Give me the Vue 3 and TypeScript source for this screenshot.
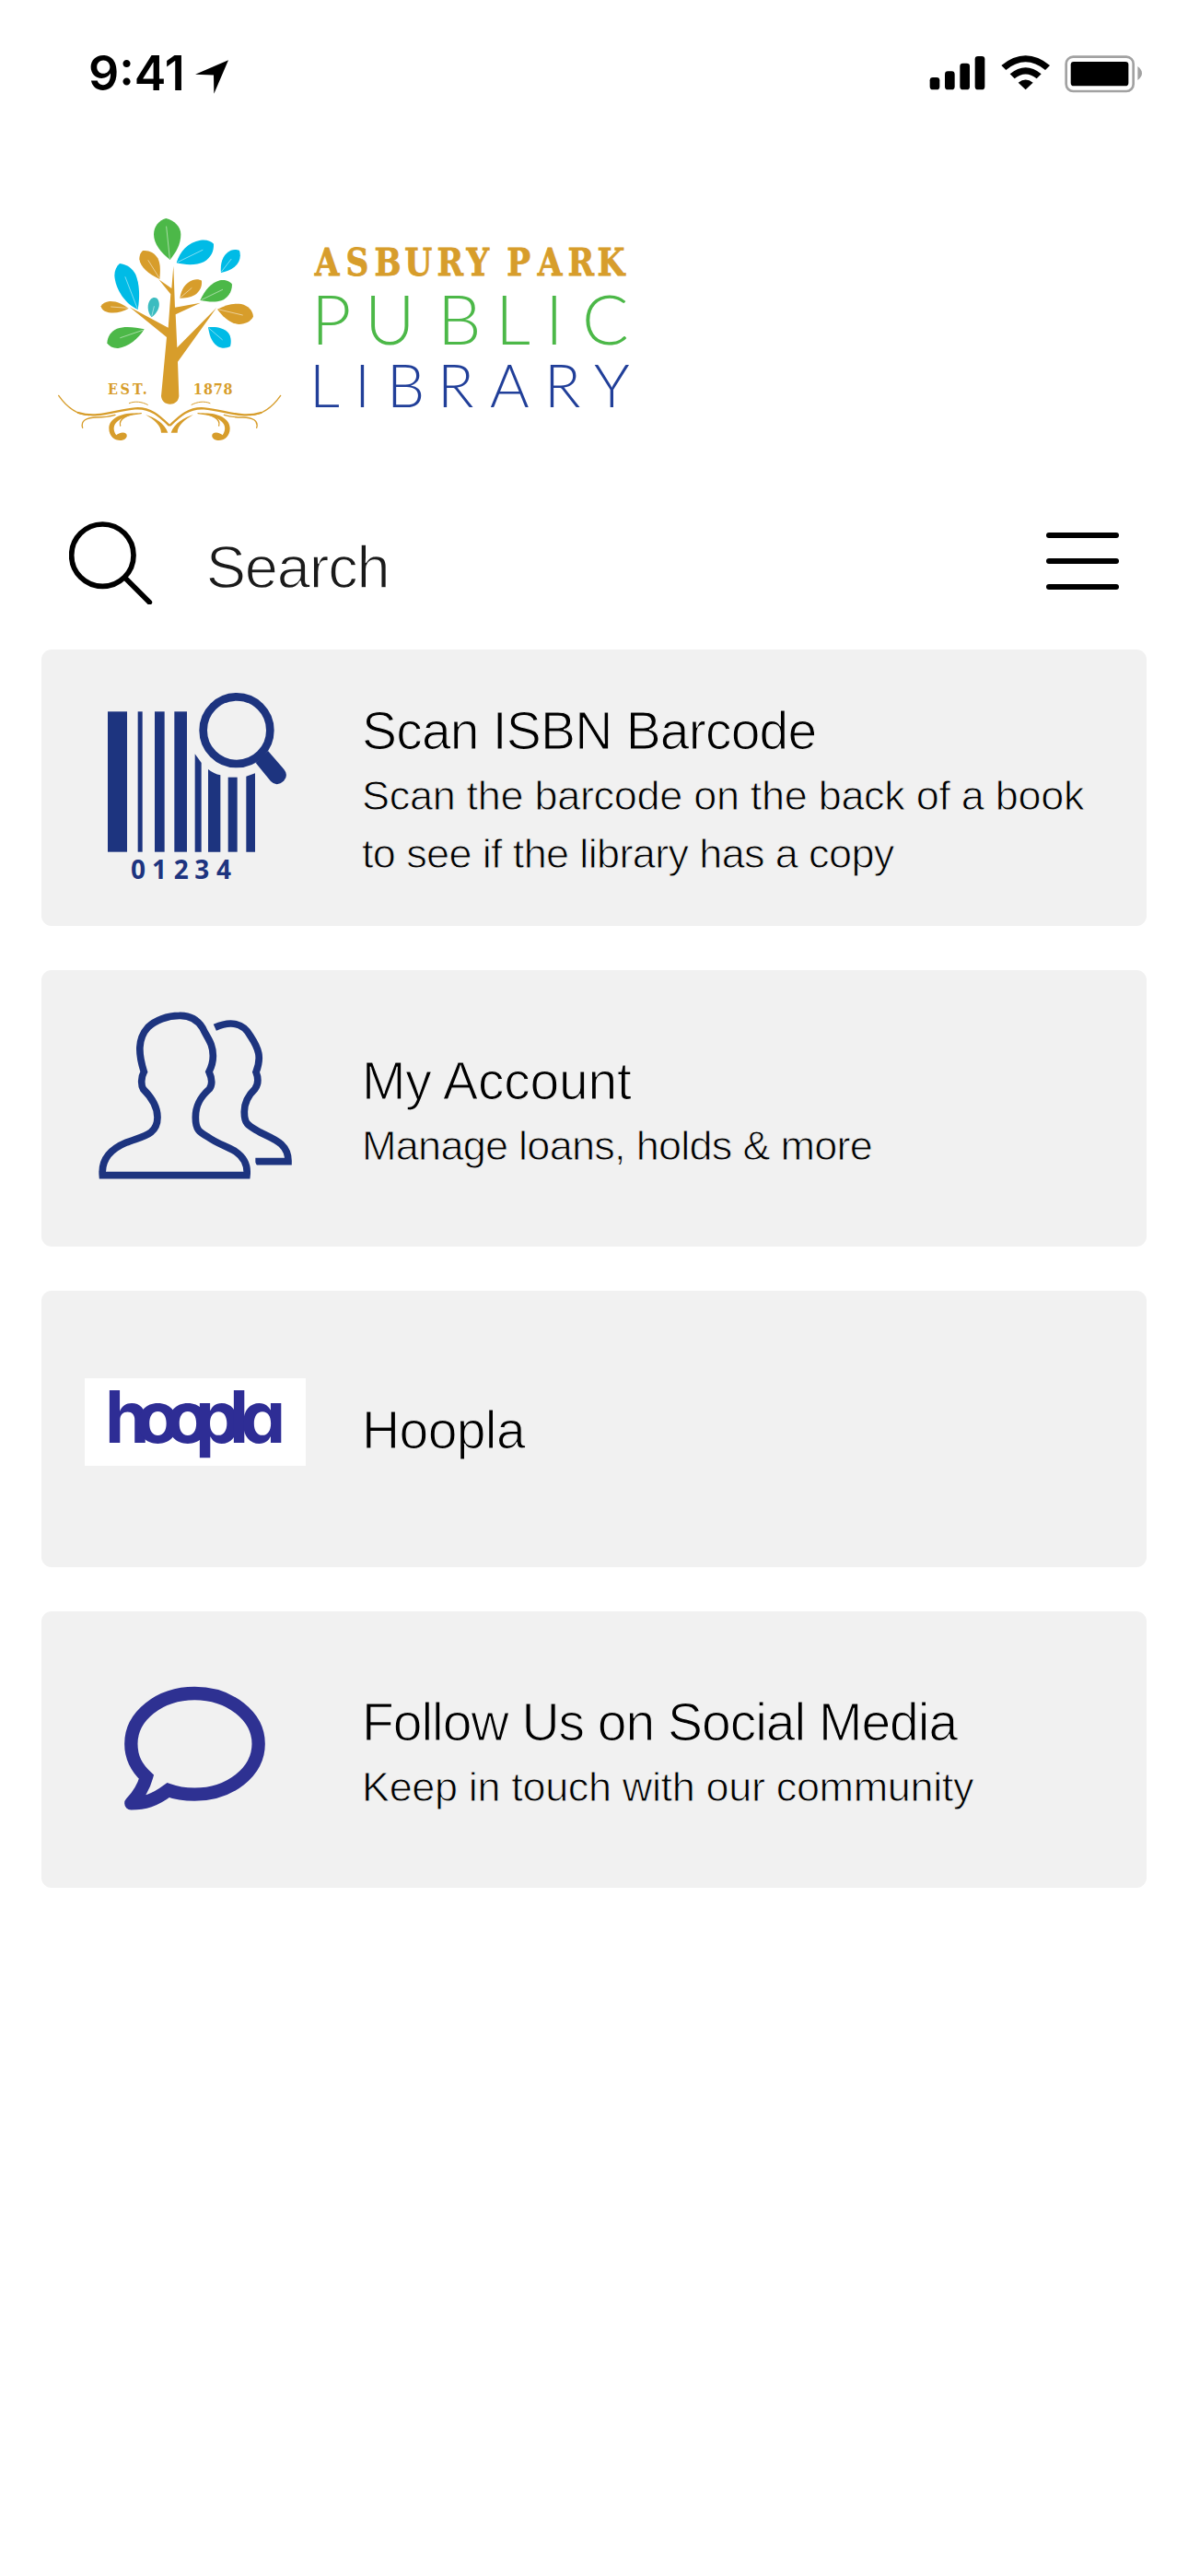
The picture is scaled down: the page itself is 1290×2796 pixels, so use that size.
<script setup lang="ts">
interface TextLine {
  text: string
  tracking: number
}

interface MenuCard {
  id: 'scan' | 'account' | 'hoopla' | 'social'
  title: TextLine
  lines: TextLine[]
}

const cards: MenuCard[] = [
  {
    id: 'scan',
    title: { text: 'Scan ISBN Barcode', tracking: -0.8 },
    lines: [
      { text: 'Scan the barcode on the back of a book', tracking: -0.3 },
      { text: 'to see if the library has a copy', tracking: -0.63 },
    ],
  },
  {
    id: 'account',
    title: { text: 'My Account', tracking: -0.2 },
    lines: [{ text: 'Manage loans, holds & more', tracking: -0.72 }],
  },
  { id: 'hoopla', title: { text: 'Hoopla', tracking: -0.6 }, lines: [] },
  {
    id: 'social',
    title: { text: 'Follow Us on Social Media', tracking: -1.02 },
    lines: [{ text: 'Keep in touch with our community', tracking: -0.35 }],
  },
]

interface Leaf {
  d: string
  color: string
  vein: string
}

const leaves: Leaf[] = [
  { color: '#4cb848', d: 'M404 186C375 164 351 135 351 103C351 79 366 58 391 51C418 58 439 78 439 103C439 136 424 161 404 186Z', vein: 'M403 182L392 78' },
  { color: '#00bbe6', d: 'M425 196C435 160 463 128 503 122C521 119 538 124 546 134C547 158 538 178 514 193C490 205 452 203 425 196Z', vein: 'M430 193L510 154' },
  { color: '#00bbe6', d: 'M570 228C566 195 578 166 602 155C612 152 624 153 630 156C636 175 631 195 614 209C601 219 586 224 570 228Z', vein: 'M572 224L603 184' },
  { color: '#d79d2b', d: 'M370 249C334 233 307 210 304 184C304 171 309 160 316 156C334 154 353 162 364 181C374 201 372 226 370 249Z', vein: 'M368 244L333 188' },
  { color: '#00bbe6', d: 'M299 348C259 330 226 284 223 237C223 221 229 207 240 198C261 200 281 212 292 234C305 266 306 309 299 348Z', vein: 'M297 343L258 242' },
  { color: '#3bbcc0', d: 'M344 373C329 355 328 328 341 314C347 309 354 308 361 311C371 321 371 339 362 353C357 361 351 368 344 373Z', vein: 'M345 367L352 338' },
  { color: '#d79d2b', d: 'M269 344C246 358 214 364 191 353C183 349 179 342 179 337C184 328 193 323 207 321C230 320 251 331 269 344Z', vein: 'M265 343L212 339' },
  { color: '#4cb848', d: 'M320 412C300 444 269 469 235 474C220 475 205 468 199 457C200 436 211 419 231 410C259 400 293 406 320 412Z', vein: 'M315 415L242 440' },
  { color: '#d79d2b', d: 'M436 311C440 283 454 260 478 252C490 248 501 250 507 254C509 274 500 290 484 301C469 309 452 311 436 311Z', vein: 'M440 307L474 278' },
  { color: '#4cb848', d: 'M502 318C517 285 539 260 566 253C583 250 600 256 606 266C606 291 592 310 571 319C550 326 524 322 502 318Z', vein: 'M507 316L575 283' },
  { color: '#d79d2b', d: 'M558 347C583 334 610 326 636 330C658 335 674 351 675 371C667 386 651 395 628 396C598 393 575 370 558 347Z', vein: 'M564 348L640 366' },
  { color: '#00bbe6', d: 'M528 406C553 403 578 407 593 423C603 435 604 453 600 468C586 475 572 475 558 467C537 453 532 428 528 406Z', vein: 'M532 410L574 446' },
]
</script>

<template>
  <div class="screen">
    <header class="status">
      <div class="status-left">
        <span class="time">9:41</span>
        <svg class="location" viewBox="457 75 108 110" aria-hidden="true">
          <path d="M565 75L457 122L517 124L518 185Z" />
        </svg>
      </div>
      <svg class="indicators" viewBox="80 50 710 140" aria-hidden="true">
        <rect x="88" y="131" width="32" height="40" rx="10" />
        <rect x="137" y="111" width="32" height="60" rx="10" />
        <rect x="186" y="85" width="32" height="86" rx="10" />
        <rect x="235" y="62" width="32" height="109" rx="10" />
        <path d="M321 92Q400 28 479 92L464 107Q400 55 336 107Z" />
        <path d="M349 120Q400 78 451 120L436 135Q400 106 364 135Z" />
        <path d="M376 148Q400 129 424 148L400 171Z" />
        <rect x="532" y="64" width="219" height="112" rx="23" fill="none" stroke="#a2a2a2" stroke-width="8" />
        <rect x="547" y="80" width="188" height="79" rx="10" />
        <path d="M765 95Q793 117 765 140Z" fill="#a2a2a2" />
      </svg>
    </header>

    <svg class="logo" viewBox="60 220 640 270" role="img">
      <g transform="translate(50 220) scale(.33333)">
        <template v-for="(leaf, i) in leaves" :key="i">
          <path :d="leaf.d" :fill="leaf.color" />
          <path :d="leaf.vein" stroke="#fff" stroke-opacity=".5" stroke-width="3" fill="none" stroke-linecap="round" />
        </template>
        <path
          fill="#d79d2b"
          d="M415 206L420 341L503 326L422 364L427 472L556 341L429 518L433 630C431 648 418 656 404 656C389 656 377 647 375 630L393 438L272 340L398 407L406 298L367 250L409 279Z"
        />
        <g fill="none" stroke="#d79d2b" stroke-linecap="round">
          <path stroke-width="4" d="M41 628C65 662 95 690 140 692" />
          <path stroke-width="7" d="M105 684C170 704 225 675 290 670C340 666 370 695 400 724" />
          <path stroke-width="4" d="M119 733C112 710 132 699 165 699C190 699 205 697 225 691" />
          <path stroke-width="3" d="M271 653C290 645 312 648 331 658" />
          <path stroke-width="4" d="M242 726C236 704 260 690 310 686" />
          <path stroke-width="4" d="M764 628C740 662 710 690 665 692" />
          <path stroke-width="7" d="M700 684C635 704 580 675 515 670C465 666 435 695 405 724" />
          <path stroke-width="4" d="M686 733C693 710 673 699 640 699C615 699 600 697 580 691" />
          <path stroke-width="3" d="M534 653C515 645 493 648 474 658" />
          <path stroke-width="4" d="M563 726C569 704 545 690 495 686" />
        </g>
        <g fill="#d79d2b">
          <path d="M302 686C250 682 205 700 205 735C205 762 225 776 246 774C261 771 267 760 261 752C250 744 235 752 229 757C211 730 220 700 302 686Z" />
          <path d="M503 686C555 682 599 700 599 735C599 762 579 776 558 774C543 771 537 760 543 752C554 744 569 752 575 757C593 730 584 700 503 686Z" />
          <path d="M324 690C355 700 386 718 397 749L375 749C375 725 352 707 324 690Z" />
          <path d="M480 690C449 700 418 718 407 749L428 749C428 725 452 707 480 690Z" />
        </g>
      </g>
      <text class="est" transform="scale(.9 1)" x="130 145 160 172" y="428">EST.</text>
      <text class="est" transform="scale(.9 1)" x="233 245.5 257.5 269.5" y="428">1878</text>
      <text class="asbury" transform="scale(.84 1)" x="407 447 484 523 565 603 640 655 695 734 772" y="299">ASBURY PARK</text>
      <text class="public" x="338 396 475 538 592 632" y="374">PUBLIC</text>
      <text class="library" x="336 385 420 475 532 591 645" y="442">LIBRARY</text>
    </svg>

    <nav class="search-row">
      <svg class="search-icon" viewBox="105 78 272 272" aria-hidden="true">
        <circle cx="214" cy="188" r="101" fill="none" stroke="#000" stroke-width="17" />
        <path d="M289 263L367 341" stroke="#000" stroke-width="17" stroke-linecap="round" />
      </svg>
      <span class="search-label">Search</span>
      <div class="menu"><i /><i /><i /></div>
    </nav>

    <main class="cards">
      <section v-for="card in cards" :key="card.id" class="card">
        <div class="card-icon">
          <svg v-if="card.id === 'scan'" viewBox="0 0 780 750" class="icon-scan" fill="#1d347f">
            <rect x="81" y="127" width="63" height="457" />
            <rect x="179" y="127" width="15" height="457" />
            <rect x="234" y="127" width="32" height="457" />
            <rect x="298" y="127" width="41" height="457" />
            <path d="M365 265L386 294V584H365Z" />
            <path d="M408 315Q427 330 448 334V584H408Z" />
            <path d="M473 341H503V584H473Z" />
            <path d="M532 338L561 328V584H532Z" />
            <circle cx="501" cy="188" r="109" fill="none" stroke="#1d347f" stroke-width="26" />
            <path d="M563 294L603 255L655 315Q671 335 655 352Q632 374 612 354Z" />
            <text class="digits" x="156 225 296 364 435" y="672">01234</text>
          </svg>
          <svg v-else-if="card.id === 'account'" viewBox="0 0 780 690" class="icon-account">
            <g fill="none" stroke="#1d347f" stroke-width="23">
              <path d="M94 617C89 560 125 530 170 511C220 490 273 488 273 428C273 391 250 360 227 337C218 323 220 296 229 280C211 223 207 173 242 135C265 112 306 97 344 97C376 96 402 108 420 137C434 169 454 186 454 228C454 249 448 266 441 280C451 302 452 322 442 336C414 361 397 387 397 428C397 469 409 476 437 492C467 514 496 521 525 538C552 556 568 582 564 617Z" />
              <path d="M460 136C511 113 553 121 576 164C603 205 613 233 594 281C602 301 602 319 591 335C564 361 555 388 556 413C556 454 573 456 607 477C648 498 700 512 699 572H592" />
            </g>
            <path d="M580 555L600 590L580 590Z" fill="#f1f1f1" />
          </svg>
          <svg v-else-if="card.id === 'hoopla'" viewBox="92 1496 240 95" class="icon-hoopla">
            <rect x="92" y="1496" width="240" height="95" fill="#fff" />
            <text class="hoopla-mark" x="114 147.5 180 212 249 261" y="1565.5">hoopla</text>
          </svg>
          <svg v-else viewBox="0 0 720 600" class="icon-social">
            <path
              d="M127 472C150 448 166 426 177 386C145 356 127 325 127 278C127 188 219 114 334 114C449 114 542 188 542 278C542 369 449 443 334 443C304 443 274 439 248 429C203 463 170 472 127 472"
              fill="none" stroke="#2e3192" stroke-width="43" stroke-linecap="round"
            />
          </svg>
        </div>
        <div class="card-text">
          <h2 :style="{ letterSpacing: card.title.tracking + 'px' }">{{ card.title.text }}</h2>
          <p v-for="line in card.lines" :key="line.text" :style="{ letterSpacing: line.tracking + 'px' }">{{ line.text }}</p>
        </div>
      </section>
    </main>
  </div>
</template>

<style>
body {
  background: #fff;
}
</style>

<style scoped>
.screen {
  width: 1290px;
  height: 2796px;
  overflow: hidden;
  background: #fff;
  color: #000;
  font-family: "Liberation Sans", sans-serif;
}

.status {
  display: flex;
  justify-content: space-between;
  height: 160px;
  padding: 0 46.6px 0 96px;
  box-sizing: border-box;
}

.status-left {
  display: flex;
  align-items: flex-start;
  padding-top: 50px;
}

.time {
  width: 116px;
  font: 600 52px/60px Inter, sans-serif;
}

.location {
  width: 36px;
  height: 37px;
  margin-top: 15px;
}

.indicators {
  width: 236.7px;
  height: 46.7px;
  margin: 56.7px 0 0;
}

.logo {
  display: block;
  width: 640px;
  height: 270px;
  margin: 60px 0 0 60px;
}

.est {
  font: 700 16px "DejaVu Serif", serif;
  fill: #d79d2b;
}

.asbury {
  font: 700 41px "DejaVu Serif", serif;
  fill: #d79d2b;
  stroke: #d79d2b;
  stroke-width: 0.8px;
}

.public {
  font: 300 75px Lato, sans-serif;
  fill: #4cb848;
}

.library {
  font: 300 65px Lato, sans-serif;
  fill: #213f99;
}

.search-row {
  display: flex;
  align-items: center;
  height: 130px;
  margin-top: 60px;
  padding: 0 75px;
}

.search-icon {
  width: 90.7px;
  height: 90.7px;
  margin-bottom: 8px;
}

.search-label {
  flex: 1;
  margin: 1px 0 0 58px;
  font-size: 65px;
  line-height: 80px;
  letter-spacing: -1.2px;
  color: #1a1a1a;
  -webkit-text-stroke: 1.4px #fff;
}

.menu {
  display: flex;
  flex-direction: column;
  gap: 22px;
  width: 79px;
  margin-bottom: 12px;
}

.menu i {
  height: 6px;
  border-radius: 3px;
  background: #000;
}

.cards {
  display: flex;
  flex-direction: column;
  gap: 48px;
  margin-top: 25px;
  padding: 0 45px;
}

.card {
  display: flex;
  align-items: center;
  height: 300px;
  border-radius: 11px;
  background: #f1f1f1;
}

.card-icon {
  display: flex;
  align-items: center;
  justify-content: center;
  width: 348px;
  height: 300px;
}

.card-icon svg {
  flex: none;
}

.icon-scan {
  width: 260px;
  height: 250px;
  margin-left: 2px;
}

.icon-account {
  width: 260px;
  height: 230px;
  margin: 0 18px 37px 0;
}

.icon-hoopla {
  width: 240px;
  height: 95px;
  margin: 0 14px 16px 0;
  overflow: visible;
}

.icon-social {
  width: 240px;
  height: 200px;
  margin: 1px 0 0 2px;
}

.digits {
  font: 700 84px "Open Sans", sans-serif;
}

.hoopla-mark {
  font: 700 78px Inter, sans-serif;
  font-feature-settings: "cv11";
  fill: #2e2d95;
}

.card-text {
  flex: 1;
  padding-top: 3px;
}

h2,
p {
  margin: 0;
  font-weight: 400;
  white-space: nowrap;
}

h2 {
  font-size: 57px;
  line-height: 77px;
  -webkit-text-stroke: 1.2px #f1f1f1;
}

p {
  font-size: 45px;
  line-height: 63px;
  -webkit-text-stroke: 0.9px #f1f1f1;
}
</style>
